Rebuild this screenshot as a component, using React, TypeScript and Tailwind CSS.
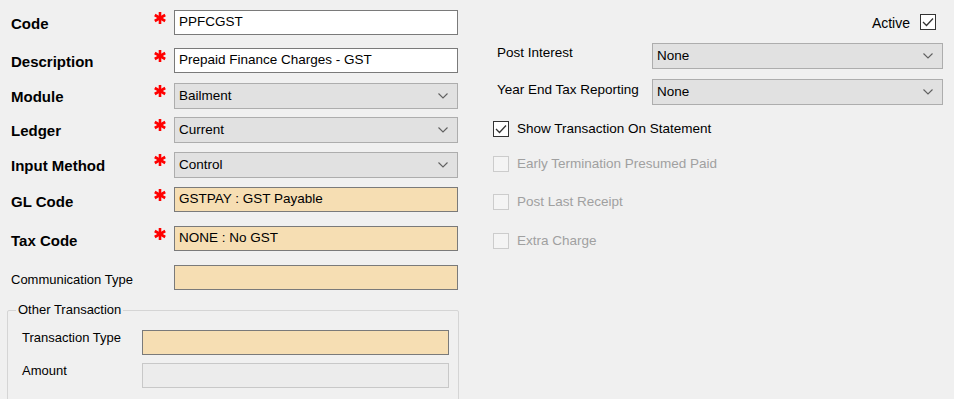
import type { ReactNode } from "react";

const font = { fontFamily: '"Liberation Sans", Arial, sans-serif' };

function Star() {
  return (
    <svg width="12" height="12" viewBox="0 0 12 12" className="block">
      <g stroke="#ff0000" strokeWidth="2.6" strokeLinecap="butt">
        <line x1="6" y1="0" x2="6" y2="12" />
        <line x1="0.8" y1="3" x2="11.2" y2="9" />
        <line x1="0.8" y1="9" x2="11.2" y2="3" />
      </g>
    </svg>
  );
}

function Chevron() {
  return (
    <svg width="10" height="6" viewBox="0 0 10 6" className="block">
      <path d="M0.5 0.5 L5 5 L9.5 0.5" fill="none" stroke="#606060" strokeWidth="1.1" />
    </svg>
  );
}

function Check({ checked, disabled }: { checked?: boolean; disabled?: boolean }) {
  return (
    <span
      className={
        "flex h-[16px] w-[16px] shrink-0 items-center justify-center border " +
        (disabled ? "border-[#cccccc] bg-[#f4f4f4]" : "border-[#333333] bg-white")
      }
    >
      {checked && (
        <svg width="12" height="10" viewBox="0 0 12 10">
          <path d="M1 5 L4.5 8.5 L11 1.5" fill="none" stroke="#333333" strokeWidth="1.3" />
        </svg>
      )}
    </span>
  );
}

function TextBox({ value, tone = "white" }: { value?: string; tone?: "white" | "wheat" | "off" }) {
  const cls =
    tone === "wheat"
      ? "border-[#7a7a7a] bg-[#f6deb3]"
      : tone === "off"
      ? "border-[#c8c8c8] bg-[#ececec]"
      : "border-[#7a7a7a] bg-white";
  return (
    <div className={`flex h-[25px] w-full items-center border px-[4px] text-[13.5px] text-black ${cls}`}>
      {value}
    </div>
  );
}

function Select({ value }: { value: string }) {
  return (
    <div className="flex h-[26px] w-full items-center justify-between border border-[#adadad] bg-[#e1e1e1] pl-[4px] pr-[9px] text-[13.5px] text-black">
      <span>{value}</span>
      <Chevron />
    </div>
  );
}

function Row({
  label,
  bold = true,
  required = true,
  top,
  labelShift = 0,
  children
}: {
  label: string;
  bold?: boolean;
  required?: boolean;
  top: number;
  labelShift?: number;
  children: ReactNode;
}) {
  return (
    <div className="flex items-stretch" style={{ marginTop: top }}>
      <div
        className={`flex w-[146px] items-center pl-[11px] ${bold ? "text-[15px] font-bold" : "pl-[10px] text-[13px]"} text-black`}
        style={{ transform: `translateY(${labelShift}px)` }}
      >
        {label}
      </div>
      <div className="flex w-[28px] justify-center pt-[2px]">{required && <Star />}</div>
      <div className="w-[284px]">{children}</div>
    </div>
  );
}

function Option({ label, checked, disabled, top }: { label: string; checked?: boolean; disabled?: boolean; top: number }) {
  return (
    <label
      className={`flex h-[16px] items-center gap-[8px] ${disabled ? "text-[#a0a0a0]" : "text-black"}`}
      style={{ marginTop: top }}
    >
      <Check checked={checked} disabled={disabled} />
      <span>{label}</span>
    </label>
  );
}

export default function App() {
  return (
    <div className="flex h-[399px] w-[954px] overflow-hidden bg-[#f0f0f0]" style={font}>
      <div className="w-[470px] shrink-0">
        <div className="pt-[10px]">
          <Row label="Code" top={0} labelShift={2}>
            <TextBox value="PPFCGST" />
          </Row>
          <Row label="Description" top={13} labelShift={2}>
            <TextBox value="Prepaid Finance Charges - GST" />
          </Row>
          <Row label="Module" top={10} labelShift={1}>
            <Select value="Bailment" />
          </Row>
          <Row label="Ledger" top={8} labelShift={1}>
            <Select value="Current" />
          </Row>
          <Row label="Input Method" top={9} labelShift={1}>
            <Select value="Control" />
          </Row>
          <Row label="GL Code" top={9} labelShift={3}>
            <TextBox value="GSTPAY : GST Payable" tone="wheat" />
          </Row>
          <Row label="Tax Code" top={14} labelShift={3}>
            <TextBox value="NONE : No GST" tone="wheat" />
          </Row>
          <Row label="Communication Type" bold={false} required={false} top={14} labelShift={2}>
            <TextBox tone="wheat" />
          </Row>
        </div>
        <div className="relative ml-[7px] mt-[20px] h-[100px] w-[452px] rounded-[2px] border border-[#d5d5d5]">
          <span className="absolute left-[8px] top-[-9px] bg-[#f0f0f0] px-[2px] text-[13px] leading-[16px] text-black">
            Other Transaction
          </span>
          <div className="flex items-start pl-[14px] pt-[19px]">
            <div className="w-[120px] text-[13px] leading-[16px] text-black">Transaction Type</div>
            <div className="w-[307px]">
              <TextBox tone="wheat" />
            </div>
          </div>
          <div className="mt-[8px] flex items-start pl-[14px]">
            <div className="w-[120px] text-[13px] leading-[16px] text-black">Amount</div>
            <div className="w-[307px]">
              <TextBox tone="off" />
            </div>
          </div>
        </div>
      </div>

      <div className="flex-1 pl-[23px] pr-[11px] text-[13.5px] leading-[16px] text-black">
        <div className="mr-[6px] mt-[14px] flex h-[17px] items-center justify-end gap-[10px]">
          <span className="text-[14px]">Active</span>
          <span className="h-[17px] w-[17px]">
            <Check checked />
          </span>
        </div>
        <div className="mt-[12px] flex items-start">
          <div className="w-[159px] pl-[4px] pt-[2px]">Post Interest</div>
          <div className="flex-1">
            <Select value="None" />
          </div>
        </div>
        <div className="mt-[10px] flex items-start">
          <div className="w-[159px] pl-[4px] pt-[3px]">Year End Tax Reporting</div>
          <div className="flex-1">
            <Select value="None" />
          </div>
        </div>
        <Option label="Show Transaction On Statement" checked top={16} />
        <Option label="Early Termination Presumed Paid" disabled top={19} />
        <Option label="Post Last Receipt" disabled top={22} />
        <Option label="Extra Charge" disabled top={23} />
      </div>
    </div>
  );
}
